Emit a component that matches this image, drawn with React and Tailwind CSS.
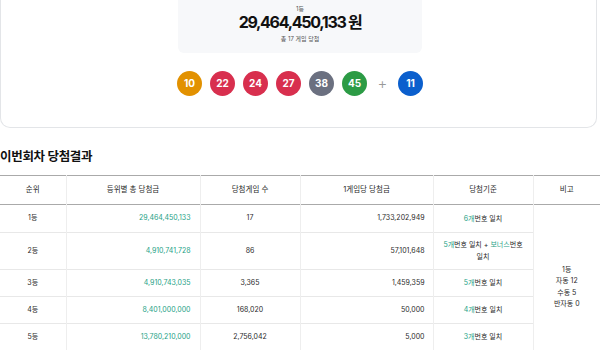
export default function App() {
  const teal = "text-[#1e9f86]";
  const balls = [
    { n: 10, c: "bg-[#e29100]" },
    { n: 22, c: "bg-[#d82f4e]" },
    { n: 24, c: "bg-[#d82f4e]" },
    { n: 27, c: "bg-[#d82f4e]" },
    { n: 38, c: "bg-[#6b7080]" },
    { n: 45, c: "bg-[#2c9b45]" },
  ];
  const rows = [
    { r: "1등", total: "29,464,450,133", cnt: "17", per: "1,733,202,949", h: "h-[28px]", crit: <><span className={teal}>6개</span>번호 일치</> },
    { r: "2등", total: "4,910,741,728", cnt: "86", per: "57,101,648", h: "h-[37px]", crit: <><span className={teal}>5개</span>번호 일치 + <span className={teal}>보너스</span>번호 일치</> },
    { r: "3등", total: "4,910,743,035", cnt: "3,365", per: "1,459,359", h: "h-[27px]", crit: <><span className={teal}>5개</span>번호 일치</> },
    { r: "4등", total: "8,401,000,000", cnt: "168,020", per: "50,000", h: "h-[27px]", crit: <><span className={teal}>4개</span>번호 일치</> },
    { r: "5등", total: "13,780,210,000", cnt: "2,756,042", per: "5,000", h: "h-[27px]", crit: <><span className={teal}>3개</span>번호 일치</> },
  ];
  return (
    <div className="w-[600px] h-[350px] overflow-hidden bg-white text-[#222] font-[Inter,'Noto_Sans_CJK_KR',sans-serif]">
      <div className="h-[128px] mr-[3px] border border-t-0 border-[#e3e5e8] rounded-b-[10px] flex flex-col items-center">
        <div className="w-[244px] h-[53px] ml-[3px] bg-[#f7f8fa] rounded-b-[6px] flex flex-col items-center pt-[5px]">
          <div className="text-[6px] leading-[8px] text-[#555]">1등</div>
          <div className="text-[16px] leading-[19px] font-bold tracking-[-1.3px] text-[#111]">29,464,450,133 원</div>
          <div className="mt-[3px] text-[6px] leading-[8px] text-[#555]">총 17 게임 당첨</div>
        </div>
        <div className="mt-[18px] ml-[3px] flex items-center">
          <div className="flex gap-[8px]">
            {balls.map((b) => (
              <div key={b.n} className={`w-[25px] h-[25px] rounded-full ${b.c} text-white text-[10px] font-bold flex items-center justify-center`}>{b.n}</div>
            ))}
          </div>
          <div className="w-[31px] text-center text-[#999] text-[15px] leading-[15px] font-light">+</div>
          <div className="w-[25px] h-[25px] rounded-full bg-[#0b5fcd] text-white text-[10px] font-bold flex items-center justify-center">11</div>
        </div>
      </div>
      <h2 className="mt-[20px] text-[12.5px] leading-[17px] font-bold text-[#111] tracking-[-0.3px]">이번회차 당첨결과</h2>
      <table className="mt-[10px] w-[600px] table-fixed border-collapse text-[7px] text-[#2a2a2a]">
        <colgroup>
          <col className="w-[66px]" />
          <col className="w-[134px]" />
          <col className="w-[100px]" />
          <col className="w-[133px]" />
          <col className="w-[100px]" />
          <col className="w-[67px]" />
        </colgroup>
        <thead>
          <tr className="h-[29px] border-t border-b border-[#aaa] text-[7.5px]">
            <th className="font-normal border-r border-[#eee]">순위</th>
            <th className="font-normal border-r border-[#eee]">등위별 총 당첨금</th>
            <th className="font-normal border-r border-[#eee]">당첨게임 수</th>
            <th className="font-normal border-r border-[#eee]">1게임당 당첨금</th>
            <th className="font-normal border-r border-[#eee]">당첨기준</th>
            <th className="font-normal">비고</th>
          </tr>
        </thead>
        <tbody>
          {rows.map((row, i) => (
            <tr key={row.r} className={`${row.h} border-b border-[#e8e8e8]`}>
              <td className="text-center border-r border-[#eee]">{row.r}</td>
              <td className={`text-right pr-[9px] border-r border-[#eee] ${teal}`}>{row.total}</td>
              <td className="text-center border-r border-[#eee]">{row.cnt}</td>
              <td className="text-right pr-[8px] border-r border-[#eee]">{row.per}</td>
              <td className="text-center px-[8px] leading-[12px] break-keep border-r border-[#eee]">{row.crit}</td>
              {i === 0 && (
                <td rowSpan={5} className="text-center align-middle pt-[18px] leading-[11.5px]">
                  1등<br />자동 12<br />수동 5<br />반자동 0
                </td>
              )}
            </tr>
          ))}
        </tbody>
      </table>
    </div>
  );
}
